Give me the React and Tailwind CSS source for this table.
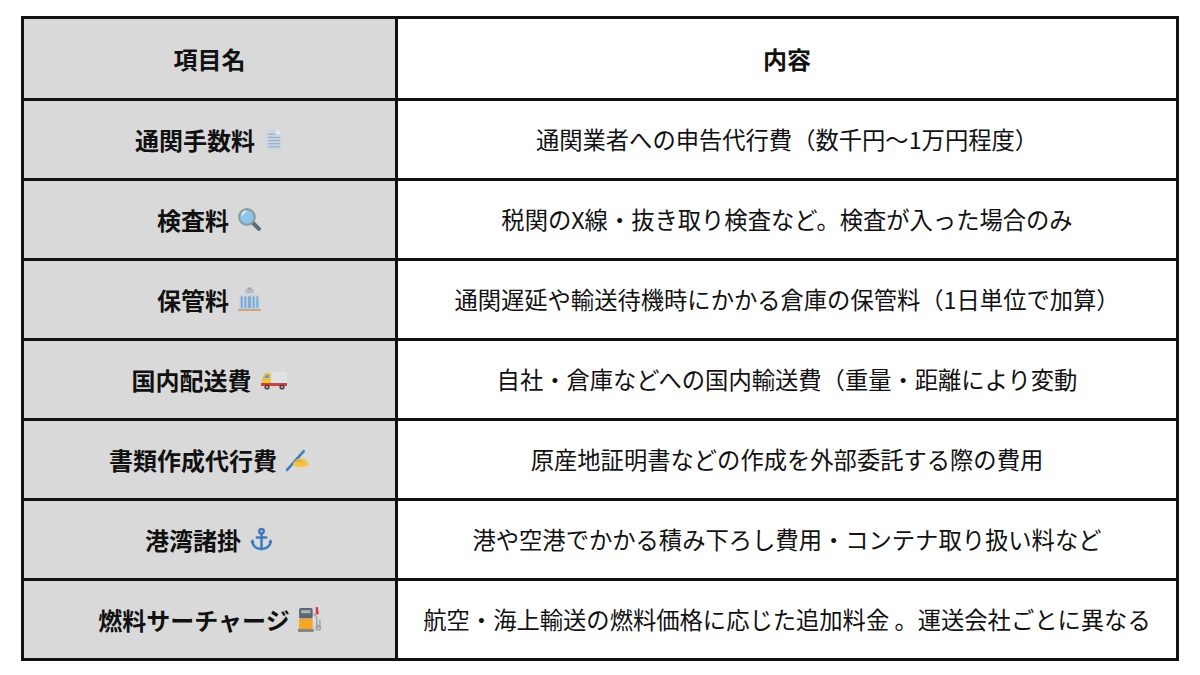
import React from "react";

const DocIcon = () => (
  <svg width="21" height="23" viewBox="0 0 20 22" className="inline-block">
    <path d="M3 1h10l5 5v15H3z" fill="#cbd6e2" />
    <path d="M13 1v5h5z" fill="#e8eef4" />
    <g stroke="#9aaec4" strokeWidth="1.2">
      <line x1="5" y1="6" x2="11" y2="6" />
      <line x1="5" y1="9" x2="16" y2="9" />
      <line x1="5" y1="12" x2="16" y2="12" />
      <line x1="5" y1="15" x2="16" y2="15" />
      <line x1="5" y1="18" x2="16" y2="18" />
    </g>
  </svg>
);

const SearchIcon = () => (
  <svg width="25" height="25" viewBox="0 0 24 24" className="inline-block">
    <path d="M14 14l7 7" stroke="#5f6b73" strokeWidth="4" strokeLinecap="round" />
    <circle cx="9.5" cy="9.5" r="7.5" fill="#8cc7ea" stroke="#8a9aa5" strokeWidth="2" />
    <path d="M5 8a5 5 0 0 1 4-4" stroke="#dff1fb" strokeWidth="1.6" fill="none" />
  </svg>
);

const BuildingIcon = () => (
  <svg width="25" height="25" viewBox="0 0 24 24" className="inline-block">
    <rect x="8" y="2" width="8" height="4" fill="#b5bcc2" />
    <rect x="10" y="0.5" width="4" height="2" fill="#9aa3ab" />
    <rect x="2" y="7" width="20" height="15" fill="#ccd3d8" />
    <g fill="#78aedc">
      <rect x="3.5" y="9" width="2" height="11" />
      <rect x="7" y="9" width="2" height="11" />
      <rect x="10.5" y="9" width="3" height="11" />
      <rect x="15" y="9" width="2" height="11" />
      <rect x="18.5" y="9" width="2" height="11" />
    </g>
    <rect x="1" y="21" width="22" height="2" fill="#c8a57a" />
  </svg>
);

const TruckIcon = () => (
  <svg width="28" height="22" viewBox="0 0 28 22" className="inline-block">
    <rect x="10" y="3" width="17" height="12" rx="1" fill="#dfe3e6" />
    <path d="M2 9l3-5h6v11H2z" fill="#f3c13a" />
    <path d="M4 9l2-3h3v3z" fill="#5aa0d8" />
    <rect x="1" y="14" width="26" height="3" fill="#d93b3b" />
    <circle cx="7" cy="18" r="2.6" fill="#444" />
    <circle cx="22" cy="18" r="2.6" fill="#444" />
    <circle cx="7" cy="18" r="1" fill="#ccc" />
    <circle cx="22" cy="18" r="1" fill="#ccc" />
  </svg>
);

const WritingIcon = () => (
  <svg width="25" height="25" viewBox="0 0 24 24" className="inline-block">
    <path d="M2 22L18 4" stroke="#3f7fbf" strokeWidth="2.5" strokeLinecap="round" />
    <path d="M8 15c2-3 6-5 9-4 3 1 5 3 6 6-2 1-5 2-9 2-3 0-5-1-6-2z" fill="#f5c33b" />
    <path d="M10 14c2-1 4-1 6 0" stroke="#e0a020" strokeWidth="1" fill="none" />
  </svg>
);

const AnchorIcon = () => (
  <svg width="25" height="25" viewBox="0 0 24 24" className="inline-block">
    <g stroke="#3b7cc1" strokeWidth="2.4" fill="none" strokeLinecap="round">
      <circle cx="12" cy="4" r="2.2" />
      <line x1="12" y1="6.5" x2="12" y2="21" />
      <line x1="7.5" y1="10" x2="16.5" y2="10" />
      <path d="M3 14c1 5 5 7 9 7s8-2 9-7" />
    </g>
    <path d="M1.5 15l2-3.5 2 3.5z" fill="#3b7cc1" />
    <path d="M18.5 15l2-3.5 2 3.5z" fill="#3b7cc1" />
  </svg>
);

const FuelIcon = () => (
  <svg width="23" height="27" viewBox="0 0 22 26" className="inline-block">
    <rect x="1" y="2" width="13" height="10" rx="1.5" fill="#5c6670" />
    <rect x="3" y="4" width="9" height="3" fill="#aab4bc" />
    <rect x="1" y="12" width="13" height="10" fill="#f6a623" />
    <rect x="0" y="22" width="15" height="3" fill="#7d8790" />
    <path d="M14 8c3 0 4 2 4 5v6c0 2 3 2 3 0v-6" stroke="#9aa3ab" strokeWidth="1.4" fill="none" />
    <path d="M17 1l2 0 1 7h-3z" fill="#d9363e" />
    <circle cx="19.5" cy="21" r="2.2" fill="none" stroke="#9aa3ab" strokeWidth="1.4" />
  </svg>
);

const rows = [
  { name: "通関手数料", icon: <DocIcon />, desc: "通関業者への申告代行費（数千円〜1万円程度）" },
  { name: "検査料", icon: <SearchIcon />, desc: "税関のX線・抜き取り検査など。検査が入った場合のみ" },
  { name: "保管料", icon: <BuildingIcon />, desc: "通関遅延や輸送待機時にかかる倉庫の保管料（1日単位で加算）" },
  { name: "国内配送費", icon: <TruckIcon />, desc: "自社・倉庫などへの国内輸送費（重量・距離により変動" },
  { name: "書類作成代行費", icon: <WritingIcon />, desc: "原産地証明書などの作成を外部委託する際の費用" },
  { name: "港湾諸掛", icon: <AnchorIcon />, desc: "港や空港でかかる積み下ろし費用・コンテナ取り扱い料など" },
  { name: "燃料サーチャージ", icon: <FuelIcon />, desc: "航空・海上輸送の燃料価格に応じた追加料金 。運送会社ごとに異なる" },
];

export default function App() {
  return (
    <div
      className="w-[1200px] h-[675px] bg-white pt-[16px] pl-[21px] text-[#111]"
      style={{ fontFamily: '"Noto Sans CJK JP", "Noto Sans", sans-serif' }}
    >
      <table className="border-collapse w-[1158px] text-[23.3px]">
        <thead>
          <tr className="h-[82px] text-[24px]">
            <th className="w-[374px] bg-[#d9d9d9] border-[3px] border-[#111] font-bold">項目名</th>
            <th className="border-[3px] border-[#111] font-bold">内容</th>
          </tr>
        </thead>
        <tbody>
          {rows.map((r) => (
            <tr key={r.name} className="h-[80px]">
              <td className="bg-[#d9d9d9] border-[3px] border-[#111] text-center font-bold text-[24px]">
                <span className="inline-flex items-center gap-[8px]">
                  {r.name}
                  {r.icon}
                </span>
              </td>
              <td className="border-[3px] border-[#111] text-center">{r.desc}</td>
            </tr>
          ))}
        </tbody>
      </table>
    </div>
  );
}
